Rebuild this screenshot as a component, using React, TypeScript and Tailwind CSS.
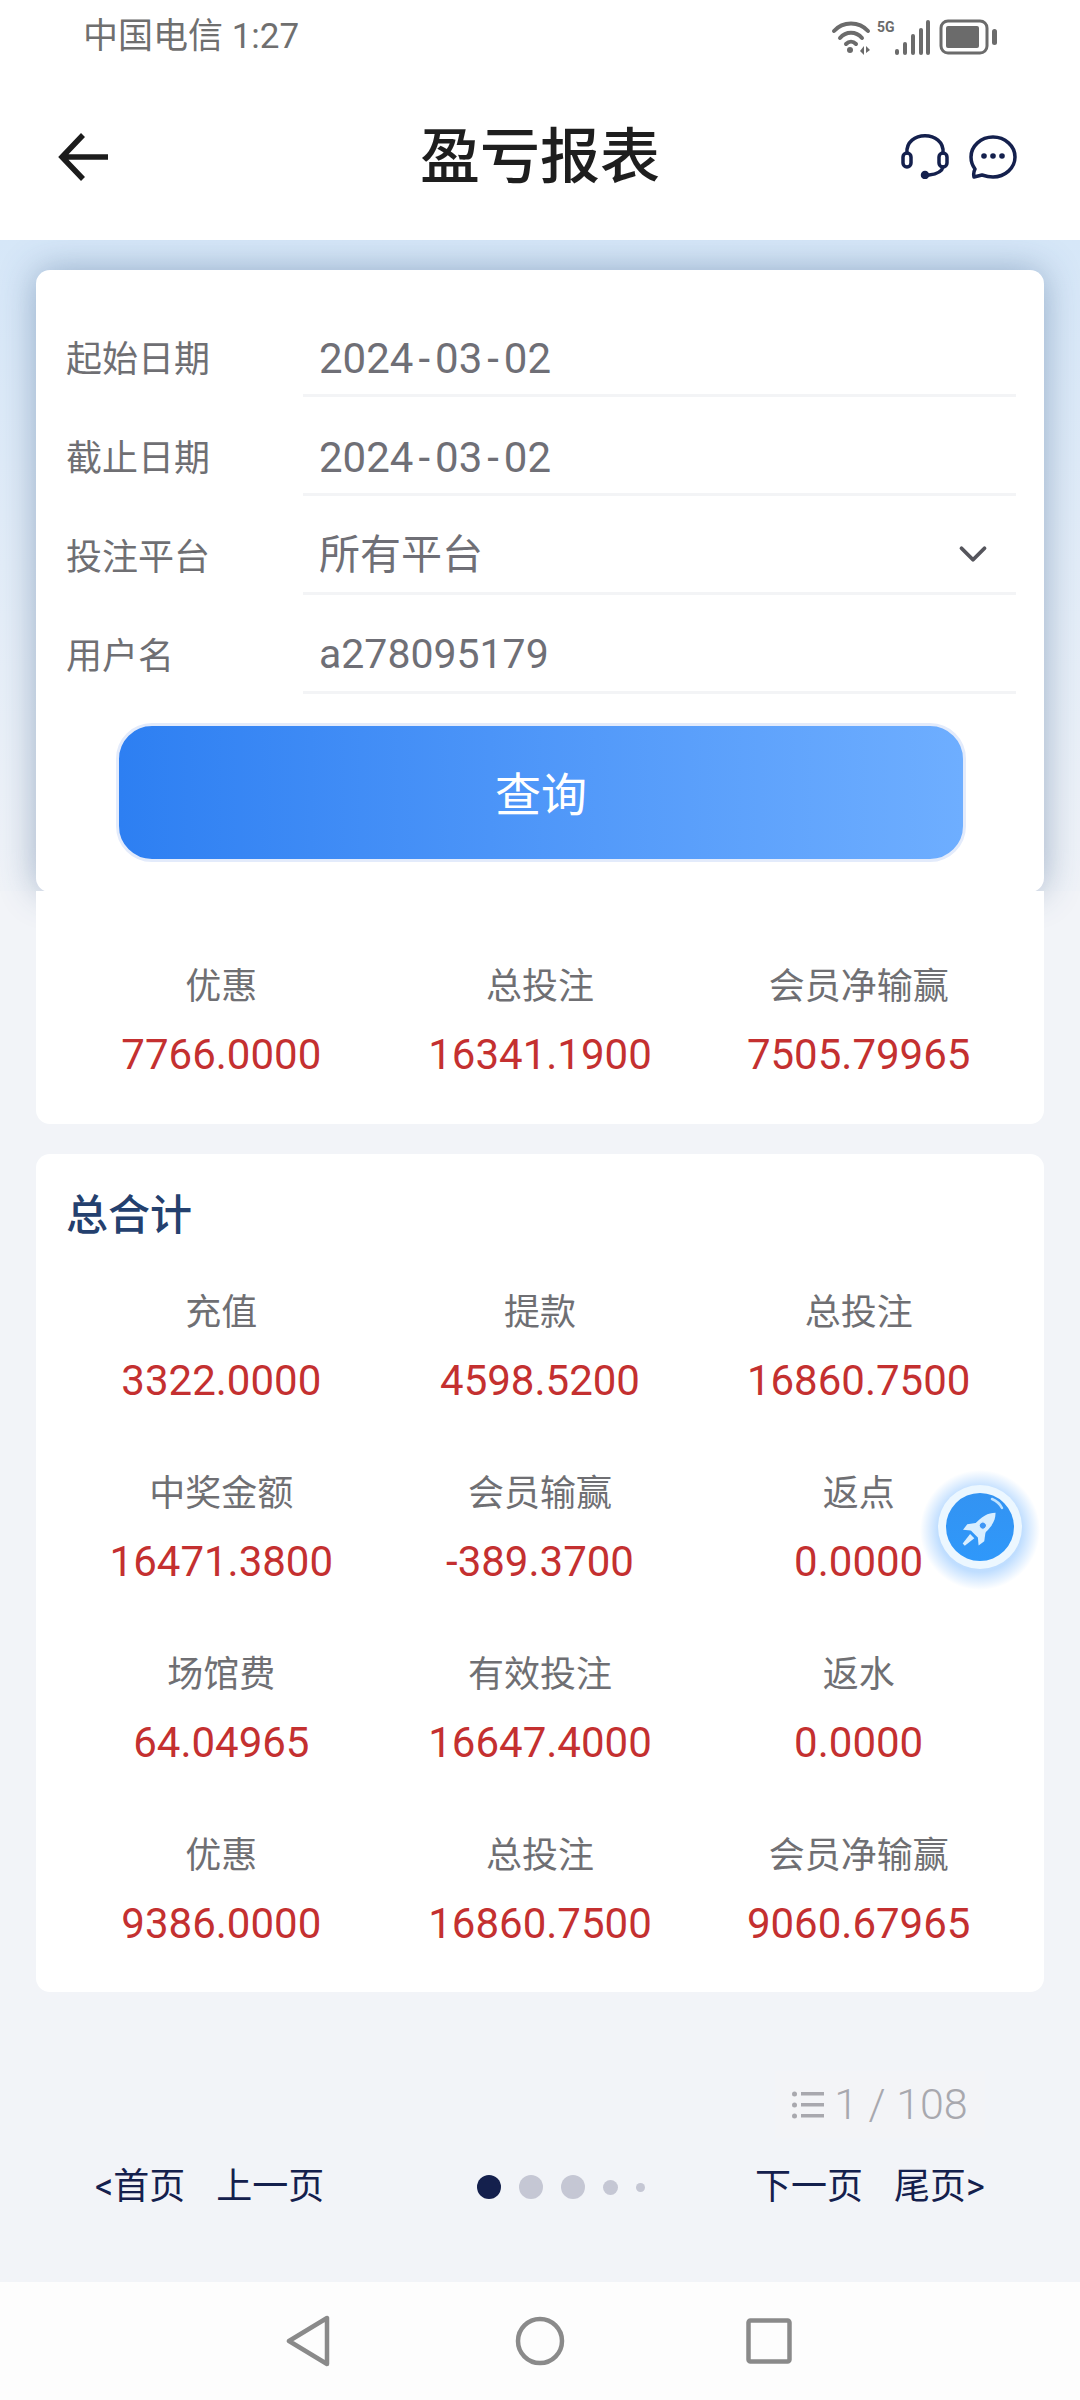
import { ChevronDown } from "lucide-react";

const FORM_ROWS = [
  { label: "起始日期", value: "2024-03-02", date: true },
  { label: "截止日期", value: "2024-03-02", date: true },
  { label: "投注平台", value: "所有平台", select: true },
  { label: "用户名", value: "a278095179" },
];

const TOTALS = [
  { label: "充值", value: "3322.0000" },
  { label: "提款", value: "4598.5200" },
  { label: "总投注", value: "16860.7500" },
  { label: "中奖金额", value: "16471.3800" },
  { label: "会员输赢", value: "-389.3700" },
  { label: "返点", value: "0.0000" },
  { label: "场馆费", value: "64.04965" },
  { label: "有效投注", value: "16647.4000" },
  { label: "返水", value: "0.0000" },
  { label: "优惠", value: "9386.0000" },
  { label: "总投注", value: "16860.7500" },
  { label: "会员净输赢", value: "9060.67965" },
];

const PARTIAL = [
  { label: "优惠", value: "7766.0000" },
  { label: "总投注", value: "16341.1900" },
  { label: "会员净输赢", value: "7505.79965" },
];

function StatusIcons() {
  return (
    <svg width="170" height="36" viewBox="0 0 170 36" fill="none" className="text-[#6b6b6b]">
      <g stroke="currentColor" strokeWidth="4" strokeLinecap="round">
        <path d="M3 12C12 2 28 2 37 12" />
        <path d="M9 19C15 12 25 12 31 19" />
        <path d="M15 25C18 22 22 22 25 25" />
      </g>
      <circle cx="19" cy="31" r="3" fill="currentColor" />
      <path d="M29 32l4-5v9zM35 27l4 4-4 3z" fill="currentColor" />
      <text x="46" y="13" fontSize="14" fontWeight="700" fill="currentColor" fontFamily="Roboto, sans-serif">5G</text>
      <g fill="currentColor">
        <rect x="64" y="30" width="4" height="6" rx="2" />
        <rect x="72" y="23" width="4" height="13" rx="2" />
        <rect x="80" y="15" width="4" height="21" rx="2" />
        <rect x="88" y="9" width="4" height="27" rx="2" />
        <rect x="95" y="1" width="4" height="35" rx="2" />
        <rect x="115" y="7" width="33" height="22" rx="2" />
        <rect x="161" y="10" width="5" height="16" rx="2.5" />
      </g>
      <rect x="110" y="2" width="46" height="32" rx="7" stroke="currentColor" strokeWidth="3" />
    </svg>
  );
}

function StatGrid({ items }: { items: { label: string; value: string }[] }) {
  return (
    <div className="grid grid-cols-3 gap-y-[63px] px-[26px] text-center">
      {items.map((item, i) => (
        <div key={i}>
          <div className="text-[36px] leading-[50px] text-[#6f6f73]">{item.label}</div>
          <div className="mt-[18px] text-[42px] leading-[50px] text-[#c43030]">{item.value}</div>
        </div>
      ))}
    </div>
  );
}

// the hyphens in the dates are wider than Roboto's
function DateValue({ value }: { value: string }) {
  const parts = value.split("-");
  return (
    <span className="text-[42px]">
      {parts.map((part, i) => (
        <span key={i}>
          {i > 0 && <span className="mx-[5px]">-</span>}
          {part}
        </span>
      ))}
    </span>
  );
}

function RocketButton() {
  return (
    <div className="absolute left-[937px] top-[1484px]">
      <svg width="86" height="86" viewBox="0 0 86 86" className="overflow-visible">
        <defs>
          <radialGradient id="glow" cx="50%" cy="50%" r="50%">
            <stop offset="70%" stopColor="#4aa0ff" stopOpacity="0.35" />
            <stop offset="100%" stopColor="#4aa0ff" stopOpacity="0" />
          </radialGradient>
          <linearGradient id="ball" x1="0" y1="0" x2="0" y2="1">
            <stop offset="0%" stopColor="#3393f2" />
            <stop offset="100%" stopColor="#2f98fa" />
          </linearGradient>
        </defs>
        <circle cx="43" cy="46" r="60" fill="url(#glow)" />
        <circle cx="43" cy="43" r="42" fill="#ecf7ff" />
        <circle cx="43" cy="43" r="34" fill="url(#ball)" />
        <path d="M55 15C60 17 63 20 65 24" stroke="#bfe2ff" strokeWidth="2.5" fill="none" strokeLinecap="round" />
        <g transform="rotate(45 43 43)" fill="#d8eeff">
          <path d="M44 22C50 28 52 36 50 52H38C36 36 38 28 44 22Z" />
          <path d="M38 42L32 50L33 57L39 52Z" />
          <path d="M50 42L56 50L55 57L49 52Z" />
          <path d="M41 55H47L45.5 67H42.5Z" />
          <circle cx="44" cy="40" r="3.5" fill="#3d96f6" stroke="#d8eeff" strokeWidth="1" />
        </g>
      </svg>
    </div>
  );
}

export default function App() {
  return (
    <div className="relative flex h-[2400px] w-[1080px] flex-col overflow-hidden bg-[#f2f4f8] font-['Roboto','Noto_Sans_CJK_SC',sans-serif]">
      <div className="relative z-10 bg-white">
        <div className="flex h-[74px] items-center justify-between pl-[83px] pr-[79px] text-[35px] text-[#6f6f6f]">
          <span>中国电信 1:27</span>
          <StatusIcons />
        </div>
        <div className="relative flex h-[166px] items-center justify-center pt-[2px]">
          <svg width="52" height="50" viewBox="0 0 52 50" fill="none" className="absolute left-[58px] top-[58px]">
            <path d="M25 3L4 25L25 47M4 25H50" stroke="#1c1c1c" strokeWidth="5.5" />
          </svg>
          <h1 className="text-[60px] font-medium leading-none text-[#1e1e1e]">盈亏报表</h1>
          <div className="absolute right-[63px] top-[59px] flex items-start gap-[20px]">
            <svg width="48" height="46" viewBox="0 0 48 46" fill="none" stroke="#14204d" strokeWidth="3.5" strokeLinecap="round">
              <path d="M6 20C4 -3 44 -3 42 20" />
              <rect x="2" y="20" width="8" height="14" rx="4" />
              <rect x="38" y="20" width="8" height="14" rx="4" />
              <path d="M42 34C41 39 36 41 28 42" />
              <circle cx="24" cy="42" r="2.5" fill="#14204d" />
            </svg>
            <svg width="48" height="44" viewBox="0 0 48 44" fill="none" className="mt-[2px]">
              <path d="M24 2C36 2 46 11 46 22C46 33 36 42 24 42C20 42 16 41 13 40L5 42C4 38 5 36 6 34C3 30 2 26 2 22C2 11 12 2 24 2Z" stroke="#14204d" strokeWidth="3.5" strokeLinejoin="round" />
              <circle cx="15" cy="21" r="2.8" fill="#14204d" />
              <circle cx="24" cy="21" r="2.8" fill="#14204d" />
              <circle cx="33" cy="21" r="2.8" fill="#14204d" />
            </svg>
          </div>
        </div>
      </div>

      <main className="flex flex-1 flex-col">
        <div className="h-[651px] bg-gradient-to-b from-[#d6e7f8] to-[#f0f3f8] px-[36px] pt-[30px]">
          <div className="rounded-[14px] bg-white pb-[30px] pl-[30px] pr-[28px] pt-[28px] shadow-[0_0_36px_rgba(50,85,130,0.42)]">
            {FORM_ROWS.map((row) => (
              <div key={row.label} className="flex h-[99px] items-center pt-[24px]">
                <div className="w-[237px] text-[36px] text-[#6f6f73]">{row.label}</div>
                <div className="-mt-[24px] flex h-[99px] flex-1 items-center justify-between border-b-[3px] border-[#f3f4f6] pl-[16px] pr-[20px] pt-[24px] text-[41px] text-[#6f6f76]">
                  {row.date ? <DateValue value={row.value} /> : <span>{row.value}</span>}
                  {row.select && <ChevronDown size={46} strokeWidth={2} className="-mt-[4px] text-[#55555c]" />}
                </div>
              </div>
            ))}
            <button className="mx-auto mt-[29px] flex h-[139px] w-[850px] items-center justify-center rounded-[36px] border-[3px] border-[#e3ebfb] bg-gradient-to-r from-[#2d7ff2] to-[#6eaeff] pt-[6px] text-[46px] text-white">
              查询
            </button>
          </div>
        </div>

        <div className="relative px-[36px]">
          <div className="rounded-b-[14px] bg-white pb-[44px] pt-[71px]">
            <StatGrid items={PARTIAL} />
          </div>

          <div className="mt-[30px] rounded-[14px] bg-white pb-[43px] pt-[37px]">
            <div className="mb-[47px] pl-[30px] text-[42px] font-medium leading-[50px] text-[#24406e]">总合计</div>
            <StatGrid items={TOTALS} />
          </div>

          <div className="mt-[79px] flex justify-end pr-[59px]">
            <div className="flex h-[67px] w-[210px] items-center justify-center gap-[10px] bg-[#f3f4f7] text-[43px] text-[#a8a8ae]">
              <svg width="32" height="30" viewBox="0 0 32 30" fill="#a8a8ae">
                <circle cx="2.5" cy="4" r="2.5" />
                <circle cx="2.5" cy="15" r="2.5" />
                <circle cx="2.5" cy="26" r="2.5" />
                <rect x="9" y="2" width="23" height="3.5" />
                <rect x="9" y="13" width="23" height="3.5" />
                <rect x="9" y="24" width="23" height="3.5" />
              </svg>
              <span className="font-light">1 / 108</span>
            </div>
          </div>

          <div className="mt-[15px] flex items-center text-[36px] leading-[68px] text-[#14204d]">
            <div className="flex w-[441px] gap-[31px] pl-[59px]">
              <span>&lt;首页</span>
              <span>上一页</span>
            </div>
            <div className="flex w-[278px] items-center">
              <span className="h-[24px] w-[24px] rounded-full bg-[#14204d]" />
              <span className="ml-[18px] h-[24px] w-[24px] rounded-full bg-[#c5c7d4]" />
              <span className="ml-[18px] h-[24px] w-[24px] rounded-full bg-[#c5c7d4]" />
              <span className="ml-[18px] h-[15px] w-[15px] rounded-full bg-[#c5c7d4]" />
              <span className="ml-[18px] h-[9px] w-[9px] rounded-full bg-[#c5c7d4]" />
            </div>
            <div className="flex gap-[31px]">
              <span>下一页</span>
              <span>尾页&gt;</span>
            </div>
          </div>
        </div>
      </main>

      <nav className="flex h-[118px] items-center justify-center bg-[#fdfdfd] pr-[3px]">
        <svg width="46" height="52" viewBox="0 0 46 52" fill="none" className="mr-[183px]">
          <path d="M42 3V49L4 26Z" stroke="#8a8a8a" strokeWidth="4.5" strokeLinejoin="round" />
        </svg>
        <svg width="52" height="52" viewBox="0 0 52 52" fill="none" className="mr-[180px]">
          <circle cx="26" cy="26" r="22" stroke="#8a8a8a" strokeWidth="4.5" />
        </svg>
        <svg width="46" height="46" viewBox="0 0 46 46" fill="none">
          <rect x="2.5" y="2.5" width="41" height="41" rx="2" stroke="#8a8a8a" strokeWidth="4.5" />
        </svg>
      </nav>

      <RocketButton />
    </div>
  );
}
